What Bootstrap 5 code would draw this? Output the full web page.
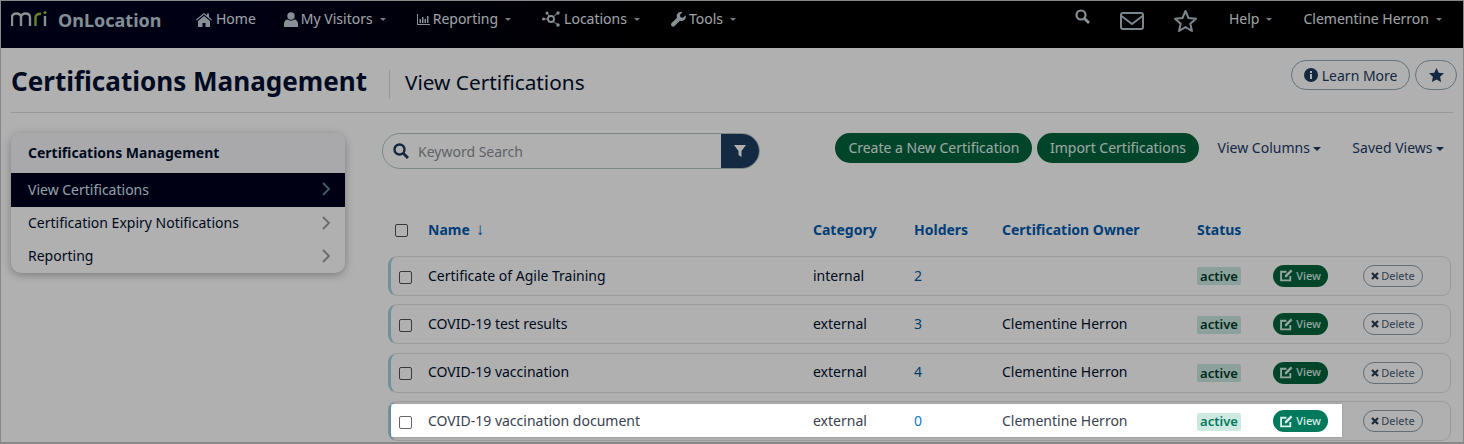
<!DOCTYPE html>
<html lang="en">
<head>
<meta charset="utf-8">
<title>Certifications Management</title>
<link href="https://cdn.jsdelivr.net/npm/bootstrap@5.3.0/dist/css/bootstrap.min.css" rel="stylesheet">
<style>
html,body{height:444px;overflow:hidden}
body{font-family:"Noto Sans",sans-serif;font-size:14px;color:#00102e;background:#fff;position:relative;border:1px solid #888;border-bottom-width:2px}
.topbar{height:47px;background:linear-gradient(90deg,#00001e 0,#00001e 15%,#000 45%);padding:0 10px;align-items:flex-start}
.brand-mark{width:48px;height:20px;margin-top:9px}
.brand-name{font-size:18px;font-weight:700;color:#bcd0d8;margin:7px 35px 0 -1px;line-height:24px;width:102px}
.top-link{color:#e4edf1;text-decoration:none;line-height:20px;margin-top:8px;display:flex;align-items:center;gap:3px;white-space:nowrap}
.top-link svg{fill:#c4d2d8;flex:none}
.caret-mini{display:inline-block;border-left:3.5px solid transparent;border-right:3.5px solid transparent;border-top:3.5px solid #a9b7bd;margin-left:4px}
.head-wrap{height:65px;margin:0 10px;border-bottom:1px solid #ddd;padding-top:15px}
.page-title{font-size:26.05px;font-weight:700;line-height:36px;margin:0;color:#001033;padding-right:22px;white-space:nowrap}
.page-sub{font-size:20.8px;line-height:25px;margin:7px 0 0;padding-left:15px;border-left:1px solid #ddd;color:#00102e;height:29px;white-space:nowrap}
.pill-set{margin-right:-4px;gap:5px}
.ghost-pill{height:30px;border:1px solid #93a7b3;border-radius:15px;background:#fff;color:#1d3b5c;display:flex;align-items:center;font-size:14px;gap:4px;padding:0 11.5px;margin-top:-3px}
.star-pill{width:42px;justify-content:center;padding:0}
.side-box{width:334px;border-radius:10px;background:#fff;box-shadow:0 2px 8px rgba(0,0,0,.3);overflow:hidden;flex:none;align-self:flex-start;margin:20px 0 0 10px}
.side-head{height:40px;background:#f5f5fa;font-weight:700;line-height:40px;padding-left:17px;color:#00102e}
.side-item{height:33px;display:flex;align-items:center;justify-content:space-between;padding:0 15px 2px 17px;color:#00102e;text-decoration:none}
.side-item.on{height:34px;background:#00001e;color:#d3e8f0}
.side-item svg{stroke:#9a9a9a;fill:none;stroke-width:1.8}
.side-item.on svg{stroke:#5f8798}
.main-col{margin-left:37px;margin-right:12px;flex:1;min-width:0;padding-top:20px}
.search-box{width:378px;height:36px;border:1px solid #b5c6c6;border-radius:18px;overflow:hidden;background:#fff}
.search-box svg.lens{margin:0 9px 0 10px}
.search-text{flex:1;color:#8b8f94;line-height:34px;padding-top:2px}
.filter-btn{width:39px;height:36px;margin:-1px;background:#1d3d60;display:flex;align-items:center;justify-content:center;border:0;padding:0 1px 0 0}
.green-pill{height:30px;border-radius:15px;background:#00653e;color:#e6f3ee;border:0;padding:0 13px;font-size:14px;white-space:nowrap;line-height:30px}
.green-pill-next{margin-left:5px;padding:0 12.5px}
.drop-link{color:#1d3b66;white-space:nowrap;line-height:30px}
.drop-link::after{content:"";display:inline-block;border-left:4px solid transparent;border-right:4px solid transparent;border-top:4px solid #1d3b66;margin-left:3.5px;vertical-align:2px}
.link-cols{margin-left:19px}
.link-views{margin-left:31px;margin-right:7px}
.grid-line{display:grid;grid-template-columns:29px 385px 101px 88px 195px 76px 90px 1fr;align-items:center}
.head-line{margin-top:46px;height:28px;padding-left:13px;font-weight:700;color:#005ab0;grid-template-columns:33px 385px 101px 88px 195px 76px 90px 1fr}
.head-line .box-tick{margin-top:3px}
.sort-arrow{font-size:17px;font-weight:400;line-height:1;margin-left:6px}
.data-line{height:40px;margin:8.45px 0 0 6px;padding:0 0 2px 8px;border:1px solid #dde3e3;border-left:3px solid #a5d4e0;border-radius:9px;background:#fff;color:#00102e}
.head-line+.data-line{margin-top:13px}
.data-line .box-tick{margin-top:4px}
.box-tick{width:13px;height:13px;border:1px solid #4d5358;border-radius:2px;background:#fff;display:block}
.holder-num{color:#005a9e}
.state-tag{display:inline-flex;align-items:center;justify-content:center;width:44px;height:18px;background:#cde9e2;color:#003a2b;font-weight:600;font-size:13px;border-radius:2px;margin-top:3px}
.view-pill{display:inline-flex;align-items:center;gap:3px;height:22px;width:55px;justify-content:center;border-radius:11px;background:#00653e;color:#dceee8;font-size:11px;font-weight:500;margin-top:2px}
.del-pill{display:inline-flex;align-items:center;gap:2px;height:22px;width:60px;justify-content:center;border-radius:11px;border:1px solid #93a0aa;background:#fff;color:#4b5c73;font-size:11px;margin-top:2px}
.spot-line .view-pill{background:#00795d}
.spot-line .state-tag{color:#00795d}
.spot-line .holder-num{color:#0a78c8}
.spot-line .box-tick{border-color:#666}
.spot-text{color:#3a4250}
.spotlight{position:absolute;left:390px;top:403px;width:951px;height:33px;box-shadow:0 0 0 3000px rgba(0,0,0,.31),0 0 2px rgba(0,0,0,.2);pointer-events:none;z-index:50}
</style>
</head>
<body>
<nav class="topbar d-flex">
  <svg class="brand-mark" viewBox="0 0 48 20" fill="none" stroke-width="2.400">
    <path d="M1 16V7.500C1 4.500 3 3.500 5.500 3.500S10 4.500 10 7.500V16M10 7.500C10 4.500 12 3.500 14.500 3.500S19 4.500 19 7.500V16" stroke="#c8d2d2"/>
    <path d="M24.500 16V8C24.500 5 26.500 3.800 30 3.800" stroke="#8cc63f"/>
    <path d="M34 16V6" stroke="#c8d2d2"/><circle cx="34" cy="2.500" r="1.500" fill="#8cc63f" stroke="none"/>
  </svg>
  <span class="brand-name">OnLocation</span>
  <a class="top-link" href="#"><svg width="18" height="15" viewBox="0 0 18 15"><path d="M9 1 1 7.500l.8 1L9 2.600l7.200 5.900.8-1L14 5V1.500h-2v1.800zM3 9v6h4.500v-4h3v4H15V9L9 4z"/></svg>Home</a>
  <a class="top-link" href="#" style="margin-left:28px"><svg width="14" height="15" viewBox="0 0 14 15"><circle cx="7" cy="4" r="3.700"/><path d="M0 15v-3c0-3 2-4.500 3.500-4.500 2 1.500 5 1.500 7 0C12 7.500 14 9 14 12v3z"/></svg>My Visitors<i class="caret-mini"></i></a>
  <a class="top-link" href="#" style="margin-left:31px"><svg width="13" height="11" viewBox="0 0 13 11"><path d="M0 0h1v10h12v1H0zM2.500 5h1.500v4H2.500zM5 3h1.500v6H5zM7.500 5H9v4H7.500zM10 2h1.500v7H10z"/></svg>Reporting<i class="caret-mini"></i></a>
  <a class="top-link" href="#" style="margin-left:31px"><svg width="19" height="16" viewBox="0 0 19 16"><circle cx="9" cy="8" r="3" fill="none" stroke="#c4d2d8" stroke-width="1.800"/><path d="M1 8h5M11 6l5-4M11 10l5 4M7 5 5 2" stroke="#c4d2d8" stroke-width="1"/><circle cx="1.500" cy="8" r="1.500"/><circle cx="16" cy="2" r="1.700"/><circle cx="16" cy="14" r="1.700"/><circle cx="5" cy="2" r="1.500"/></svg>Locations<i class="caret-mini"></i></a>
  <a class="top-link" href="#" style="margin-left:31px"><svg width="15" height="15" viewBox="0 0 15 15"><path d="M14.600 3.200 11.900 5.800 9.500 5.200 8.900 2.800 11.600.2C9.500-.4 7.300.2 6.300 1.900 5.500 3.200 5.500 4.500 6 5.700L.6 11.100c-.8.800-.8 2.100 0 2.900.8.900 2.200.9 3 0l5.300-5.300c1.300.5 2.700.4 3.900-.4 1.800-1.100 2.400-3.200 1.800-5.100z"/></svg>Tools<i class="caret-mini"></i></a>
  <div class="ms-auto d-flex align-items-start">
    <a class="top-link" href="#"><svg width="15" height="15" viewBox="0 0 15 15"><circle cx="6" cy="6" r="4.500" fill="none" stroke="#c4d2d8" stroke-width="2.200"/><path d="m9.500 9.500 4.500 4.500" stroke="#c4d2d8" stroke-width="2.800"/></svg></a>
    <a class="top-link" href="#" style="margin:11px 0 0 30px"><svg width="24" height="18" viewBox="0 0 24 18" fill="none"><rect x="1" y="1" width="22" height="16" rx="2" fill="none" stroke="#b3c4ce" stroke-width="2"/><path d="m1.500 4 10.500 8 10.500-8" fill="none" stroke="#b3c4ce" stroke-width="2"/></svg></a>
    <a class="top-link" href="#" style="margin:8px 0 0 29px"><svg width="25" height="24" viewBox="0 0 25 24"><path d="m12.500 2 3 7 7.500.7-5.700 5 1.700 7.300-6.500-3.900L6 22l1.700-7.300-5.700-5L9.500 9z" fill="none" stroke="#b3c4ce" stroke-width="2" stroke-linejoin="round"/></svg></a>
    <a class="top-link" href="#" style="margin-left:31px">Help<i class="caret-mini"></i></a>
    <a class="top-link" href="#" style="margin-left:31px;margin-right:11px">Clementine Herron<i class="caret-mini"></i></a>
  </div>
</nav>
<header class="head-wrap d-flex">
  <h1 class="page-title">Certifications Management</h1>
  <h2 class="page-sub fw-normal">View Certifications</h2>
  <div class="ms-auto d-flex pill-set">
    <a class="ghost-pill text-decoration-none" href="#"><svg width="14" height="14" viewBox="0 0 14 14"><circle cx="7" cy="7" r="7" fill="#1d3b5c"/><rect x="6" y="6" width="2" height="5" fill="#fff"/><rect x="6" y="3" width="2" height="2" fill="#fff"/></svg>Learn More</a>
    <a class="ghost-pill star-pill text-decoration-none" href="#"><svg width="15" height="14" viewBox="0 0 15 14"><path d="m7.500 0 2.200 4.700 5.300.6-3.900 3.500 1 5.200-4.600-2.600L2.900 14l1-5.200L0 5.300l5.300-.6z" fill="#1d3b5c"/></svg></a>
  </div>
</header>
<div class="d-flex">
  <aside class="side-box">
    <div class="side-head">Certifications Management</div>
    <a class="side-item on" href="#">View Certifications<svg width="8" height="14" viewBox="0 0 8 14"><path d="m1 1 6 6-6 6"/></svg></a>
    <a class="side-item" href="#">Certification Expiry Notifications<svg width="8" height="14" viewBox="0 0 8 14"><path d="m1 1 6 6-6 6"/></svg></a>
    <a class="side-item" href="#">Reporting<svg width="8" height="14" viewBox="0 0 8 14"><path d="m1 1 6 6-6 6"/></svg></a>
  </aside>
  <main class="main-col">
    <div class="d-flex align-items-start">
      <div class="search-box d-flex align-items-center">
        <svg class="lens" width="16" height="16" viewBox="0 0 16 16"><circle cx="6.500" cy="6.500" r="5" fill="none" stroke="#1d3b5c" stroke-width="2.400"/><path d="m10 10 5 5" stroke="#1d3b5c" stroke-width="2.800"/></svg>
        <span class="search-text">Keyword Search</span>
        <button class="filter-btn" type="button" aria-label="Filter"><svg width="12" height="12" viewBox="0 0 12 12"><path d="M0 0h12L7.500 6v6L4.500 10V6z" fill="#fff"/></svg></button>
      </div>
      <div class="ms-auto d-flex align-items-center">
        <button class="green-pill" type="button">Create a New Certification</button>
        <button class="green-pill green-pill-next" type="button">Import Certifications</button>
        <span class="drop-link link-cols">View Columns</span>
        <span class="drop-link link-views">Saved Views</span>
      </div>
    </div>
    <div class="grid-line head-line">
      <span class="box-tick"></span><span>Name<span class="sort-arrow">↓</span></span><span>Category</span><span>Holders</span><span>Certification Owner</span><span>Status</span><span></span><span></span>
    </div>
    <div class="grid-line data-line">
      <span class="box-tick"></span><span>Certificate of Agile Training</span><span>internal</span><span class="holder-num">2</span><span></span><span><span class="state-tag">active</span></span><span><span class="view-pill"><svg width="13" height="13" viewBox="0 0 12 12"><path d="M9.500 6.500V10.500H1V2.500H6" fill="none" stroke="#dceee8" stroke-width="1.700"/><path d="M4.500 5.800 10 .500l1.500 1.500L6 7.500H4.500z" fill="#dceee8"/></svg>View</span></span><span><span class="del-pill"><svg width="8" height="8" viewBox="0 0 8 8"><path d="m1 1 6 6M7 1 1 7" stroke="#2a3d55" stroke-width="2.200"/></svg>Delete</span></span>
    </div>
    <div class="grid-line data-line">
      <span class="box-tick"></span><span>COVID-19 test results</span><span>external</span><span class="holder-num">3</span><span>Clementine Herron</span><span><span class="state-tag">active</span></span><span><span class="view-pill"><svg width="13" height="13" viewBox="0 0 12 12"><path d="M9.500 6.500V10.500H1V2.500H6" fill="none" stroke="#dceee8" stroke-width="1.700"/><path d="M4.500 5.800 10 .500l1.500 1.500L6 7.500H4.500z" fill="#dceee8"/></svg>View</span></span><span><span class="del-pill"><svg width="8" height="8" viewBox="0 0 8 8"><path d="m1 1 6 6M7 1 1 7" stroke="#2a3d55" stroke-width="2.200"/></svg>Delete</span></span>
    </div>
    <div class="grid-line data-line">
      <span class="box-tick"></span><span>COVID-19 vaccination</span><span>external</span><span class="holder-num">4</span><span>Clementine Herron</span><span><span class="state-tag">active</span></span><span><span class="view-pill"><svg width="13" height="13" viewBox="0 0 12 12"><path d="M9.500 6.500V10.500H1V2.500H6" fill="none" stroke="#dceee8" stroke-width="1.700"/><path d="M4.500 5.800 10 .500l1.500 1.500L6 7.500H4.500z" fill="#dceee8"/></svg>View</span></span><span><span class="del-pill"><svg width="8" height="8" viewBox="0 0 8 8"><path d="m1 1 6 6M7 1 1 7" stroke="#2a3d55" stroke-width="2.200"/></svg>Delete</span></span>
    </div>
    <div class="grid-line data-line spot-line">
      <span class="box-tick"></span><span class="spot-text">COVID-19 vaccination document</span><span class="spot-text">external</span><span class="holder-num">0</span><span class="spot-text">Clementine Herron</span><span><span class="state-tag">active</span></span><span><span class="view-pill"><svg width="13" height="13" viewBox="0 0 12 12"><path d="M9.500 6.500V10.500H1V2.500H6" fill="none" stroke="#dceee8" stroke-width="1.700"/><path d="M4.500 5.800 10 .500l1.500 1.500L6 7.500H4.500z" fill="#dceee8"/></svg>View</span></span><span><span class="del-pill"><svg width="8" height="8" viewBox="0 0 8 8"><path d="m1 1 6 6M7 1 1 7" stroke="#2a3d55" stroke-width="2.200"/></svg>Delete</span></span>
    </div>
  </main>
</div>
<div class="spotlight"></div>
<script src="https://cdn.jsdelivr.net/npm/bootstrap@5.3.0/dist/js/bootstrap.bundle.min.js"></script>
</body>
</html>
